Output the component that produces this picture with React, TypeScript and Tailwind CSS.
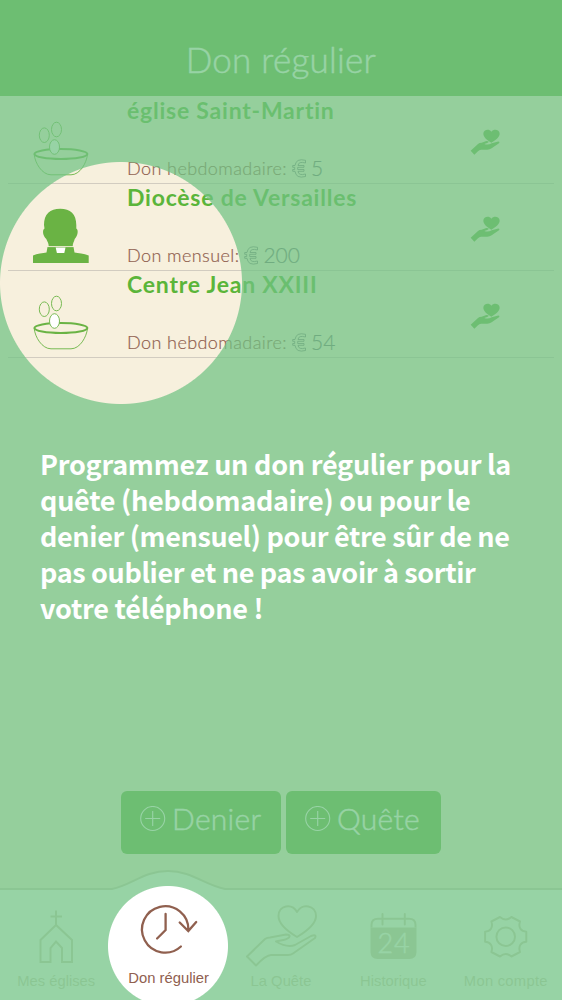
import React from "react";

type Donation = {
  name: string;
  label: string;
  amount: string;
  kind: "bowl" | "priest";
};

const donations: Donation[] = [
  { name: "église Saint-Martin", label: "Don hebdomadaire:", amount: "5", kind: "bowl" },
  { name: "Diocèse de Versailles", label: "Don mensuel:", amount: "200", kind: "priest" },
  { name: "Centre Jean XXIII", label: "Don hebdomadaire:", amount: "54", kind: "bowl" },
];

function BowlIcon() {
  return (
    <svg width="58" height="56" viewBox="0 0 58 56" fill="none" stroke="#6ab344">
      <ellipse cx="12.3" cy="14.2" rx="5" ry="7.3" strokeWidth="0.9" />
      <ellipse cx="24.5" cy="8.5" rx="5" ry="7.3" strokeWidth="0.9" />
      <path d="M2.2 33.5C3 42 10 53.8 19 53.8H39C48 53.8 54.5 42 55.5 33.5" strokeWidth="0.9" />
      <ellipse cx="28.9" cy="33" rx="26.5" ry="5" strokeWidth="2" />
      <ellipse cx="22.5" cy="26" rx="5" ry="7.3" strokeWidth="0.9" fill="#fff" />
    </svg>
  );
}

function PriestIcon() {
  return (
    <svg width="58" height="56" viewBox="0 0 58 56" fill="#6ab344">
      <path d="M12 17C12 6 18 .7 28.2 .7S44.3 6 44.3 17V20.5C46.800 22 45.800 28 42.700 31C42 34 40.700 35 40.700 38.300H16.700C16.700 35 15.500 34 14.300 31C10.800 28 10 22 12.500 20.500Z" />
      <path d="M1 55V47.500C5 45.500 11 45 14.500 44.500L15.500 39H41.500L42.500 44.500C46 45 52 45.500 56.700 47.500V55Z" />
      <path d="M23.700 39.500H33.500L32.300 45H24.900Z" fill="#fff" />
      <path d="M15.500 38.700H41.500" stroke="#f7f0dd" strokeWidth="0.5" />
    </svg>
  );
}

function HandHeartIcon() {
  return (
    <svg width="30" height="27" viewBox="0 0 90 81" fill="#66b045">
      <path d="M64 41C52 33 40 25 40 14C40 2 57-2 64 8C72-2 89 2 89 14C89 25 76 33 64 41Z" />
      <path d="M2 65L24 45Q28 41 35 41L49 36Q57 36 56 39Q54 42 43 45Q54 49 65 43L82 38Q91 37 87 43L65 58Q58 63 49 62L33 62Q28 63 24 67L13 77Z" />
    </svg>
  );
}

function EuroIcon() {
  return (
    <svg width="15" height="19" viewBox="0 0 15 19" fill="none" stroke="#707078" strokeWidth="0.8">
      <path d="M13.500 1.300V4Q6.500 2 6 6.500H12V8.300H5.700V10.500H12V12.300H6Q6.500 17 13.500 15V17.500Q4 20 3 12.300H.7V10.500H2.700V8.300H.7V6.500H3Q4-1 13.500 1.300Z" />
    </svg>
  );
}

function DonationRow({ item }: { item: Donation }) {
  return (
    <li className="mx-2 flex h-[87px] border-b border-[#d2ccc0] pl-6">
      <div className="w-[95px] shrink-0 pt-6">
        {item.kind === "bowl" ? <BowlIcon /> : <PriestIcon />}
      </div>
      <div className="flex w-[343px] shrink-0 flex-col justify-between pb-[2px]">
        <h2 className="text-[23px] leading-[26px] font-bold tracking-[0.77px] whitespace-nowrap text-[#5bb53a]">{item.name}</h2>
        <p className="flex items-center text-[18px] leading-[26px] font-light whitespace-nowrap text-[#90604f] [-webkit-text-stroke:0.2px]">
          <span className="tracking-[0.42px]">{item.label}</span>
          <span className="mr-1 ml-[5px]"><EuroIcon /></span>
          <span className="text-[21px] text-[#707078]">{item.amount}</span>
        </p>
      </div>
      <div className="pt-[32px]">
        <HandHeartIcon />
      </div>
    </li>
  );
}

function AddButton({ label, className }: { label: string; className: string }) {
  return (
    <button className={`flex h-[63px] items-start rounded-[6px] bg-[#66b045] pt-[8px] pl-[19px] text-white ${className}`}>
      <svg className="mt-[7px] mr-[6px] shrink-0" width="26" height="26" viewBox="0 0 26 26" fill="none" stroke="#fff" strokeWidth="1.1">
        <circle cx="12.7" cy="12.5" r="12" />
        <path d="M12.7 5V20M5.200 12.5H20.200" />
      </svg>
      <span className="text-[30px] leading-[39px] font-light tracking-[0.3px] [-webkit-text-stroke:0.4px]">{label}</span>
    </button>
  );
}

function ChurchIcon() {
  return (
    <svg width="80" height="70" viewBox="0 0 80 70" fill="none" stroke="#d4cfbd" strokeWidth="2">
      <path d="M40 10.5V25M34.5 16.500H46M40 25L24.500 40V62H34.500V48L40 41.500L46 48V62H56V40Z" />
    </svg>
  );
}

function ClockIcon() {
  return (
    <svg width="80" height="70" viewBox="0 0 80 70" fill="none" stroke="#90604f" strokeWidth="2.3" strokeLinecap="round">
      <path d="M51.900 46.500A23.200 23.200 0 1 1 59.400 30M36.600 14V30L28.100 38.500M50.700 22.500L59.300 31L67.200 22" />
    </svg>
  );
}

function GiveIcon() {
  return (
    <svg width="80" height="70" viewBox="0 0 80 70" fill="none" stroke="#d4cfbd" strokeWidth="2" strokeLinejoin="round">
      <path d="M56 37C46 31 37.500 24 37.500 16C37.500 5 51 3 56 12C61 3 75 5 75 16C75 24 66 31 56 37Z" />
      <path d="M6 56.500L24 39Q26 37.500 29 37.500L45 34.500Q50 34.500 48 37.500C44 41 39 40 35 41.500Q46 48 54 45L70 36Q76 34 74 38L52 53.500Q50 55 47 55H30Q25 55 15 65.500Z" />
    </svg>
  );
}

function CalendarIcon() {
  return (
    <svg width="80" height="70" viewBox="0 0 80 70" fill="none" stroke="#d4cfbd" strokeWidth="2">
      <path d="M18.500 27.500V25Q18.500 18.700 25 18.700H56Q62.500 18.700 62.500 25V27.500" />
      <path d="M17.500 27.500H63.500V52Q63.500 59 56.500 59H24.500Q17.500 59 17.500 52Z" fill="#d4cfbd" stroke="none" />
      <path d="M29.500 14V24.500M51.800 14V24.500" strokeLinecap="round" />
      <text x="41" y="52.500" textAnchor="middle" fill="#fff" stroke="#fff" strokeWidth="0.4" className="text-[27px] font-light tracking-[0.8px] [font-family:Lato,sans-serif]">24</text>
    </svg>
  );
}

function GearIcon() {
  return (
    <svg width="80" height="70" viewBox="0 0 80 70" fill="none" stroke="#d4cfbd" strokeWidth="2" strokeLinejoin="round">
      <circle cx="39.700" cy="36.700" r="9.300" />
      <path d="M34 17Q39.700 22 45.400 17L54 21.500C52 27.500 55 31.500 60.300 31.700V41.700C55 42 52 46 54 52L45.400 56.500Q39.700 51.500 34 56.500L25.400 52C27.400 46 24.400 42 19.100 41.700V31.700C24.400 31.500 27.400 27.500 25.400 21.500Z" />
    </svg>
  );
}

const tabs = [
  { label: "Mes églises", icon: <ChurchIcon />, text: "text-[#d4cfbd]" },
  { label: "Don régulier", icon: <ClockIcon />, text: "-mt-[3px] text-[#90604f]" },
  { label: "La Quête", icon: <GiveIcon />, text: "text-[#d4cfbd]" },
  { label: "Historique", icon: <CalendarIcon />, text: "text-[#d4cfbd]" },
  { label: "Mon compte", icon: <GearIcon />, text: "text-[#d4cfbd] tracking-[0.25px]" },
];

function TabBar() {
  return (
    <nav className="relative h-[132px] shrink-0">
      <svg className="absolute inset-0" width="562" height="132" viewBox="0 0 562 132">
        <path d="M-2 21H112C132 17 144 3 168 3S204 17 225 21H564V134H-2Z" fill="#fff" stroke="#d4cfbd" strokeWidth="2" />
      </svg>
      <div className="relative grid grid-cols-5 pt-[32px] [font-family:'Liberation_Sans',Arial,sans-serif]">
        {tabs.map((tab) => (
          <div key={tab.label} className="flex flex-col items-center">
            <div className="flex h-[71px] justify-center">{tab.icon}</div>
            <span className={`text-[14.8px] leading-[20px] whitespace-nowrap ${tab.text}`}>{tab.label}</span>
          </div>
        ))}
      </div>
    </nav>
  );
}

export default function App() {
  return (
    <div className="relative flex h-[1000px] w-[562px] flex-col overflow-hidden bg-[#f7f0dd] [font-family:Lato,'Open_Sans',sans-serif]">
      <header className="flex h-[96px] shrink-0 items-end justify-center bg-[#66b045] pb-[14px]">
        <h1 className="text-[35px] leading-[46px] font-light tracking-[0.25px] text-white [-webkit-text-stroke:0.4px]">Don régulier</h1>
      </header>
      <ul className="pt-px">
        {donations.map((item) => (
          <DonationRow key={item.name} item={item} />
        ))}
      </ul>
      <div className="grow" />
      <div className="mb-[14px] flex justify-center gap-[5px]">
        <AddButton label="Denier" className="w-[160px]" />
        <AddButton label="Quête" className="w-[155px]" />
      </div>
      <TabBar />
      <div className="absolute inset-0 bg-[rgba(113,195,132,0.73)] [mask-composite:intersect] [mask-image:radial-gradient(circle_at_121px_283px,transparent_120.5px,black_121.5px),radial-gradient(circle_at_168px_946px,transparent_59.5px,black_60.5px)]" />
      <div className="absolute inset-x-0 top-[446px] pl-10 text-[27px] leading-[36px] font-bold tracking-[-0.25px] whitespace-nowrap text-white [font-family:'Noto_Sans_CJK_SC',sans-serif]">
        <p>Programmez un don régulier pour la</p>
        <p>quête (hebdomadaire) ou pour le</p>
        <p className="tracking-[-0.36px]">denier (mensuel) pour être sûr de ne</p>
        <p className="tracking-[-0.36px]">pas oublier et ne pas avoir à sortir</p>
        <p>votre téléphone !</p>
      </div>
    </div>
  );
}
